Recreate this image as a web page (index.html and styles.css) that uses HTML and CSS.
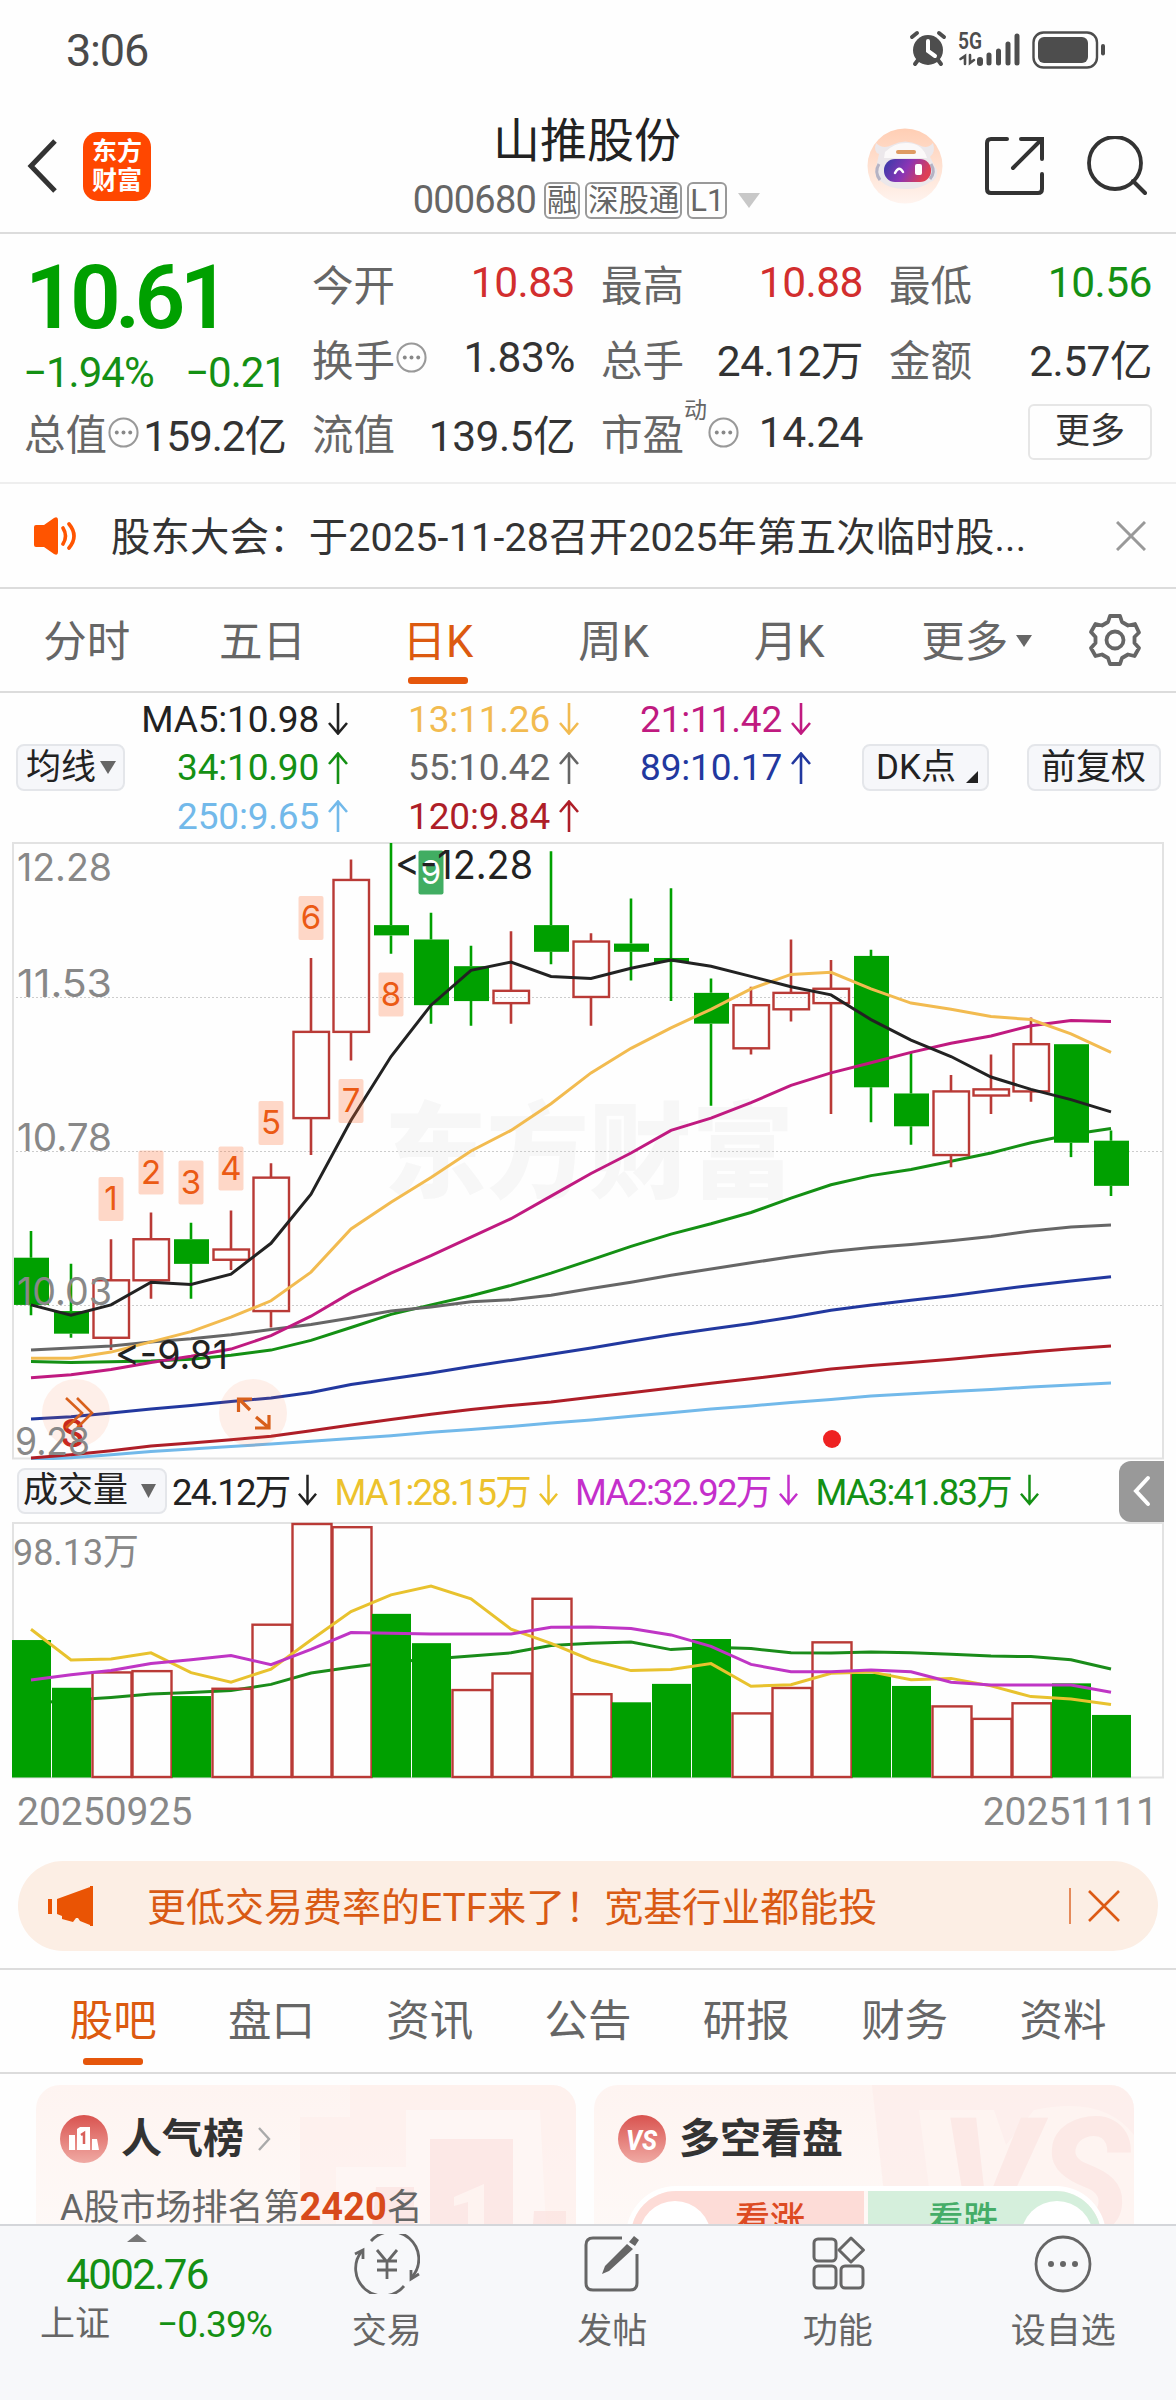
FILE: index.html
```html
<!DOCTYPE html>
<html lang="zh-CN">

<head>
  <meta charset="UTF-8">
  <meta name="viewport" content="width=device-width, initial-scale=1.0">
  <title>山推股份</title>
  <link rel="stylesheet" href="styles.css">
</head>

<body>
  <svg class="defs" width="0" height="0">
    <symbol id="down" viewBox="0 0 20 32">
      <path d="M10 0V30M1 20L10 30.5L19 20" fill="none" stroke="currentColor" stroke-width="2.6" />
    </symbol>
    <symbol id="up" viewBox="0 0 20 32">
      <path d="M10 32V2M1 12L10 1.5L19 12" fill="none" stroke="currentColor" stroke-width="2.6" />
    </symbol>
    <symbol id="info" viewBox="0 0 30 30">
      <circle cx="15" cy="15" r="13.6" fill="none" stroke="#999" stroke-width="2" />
      <circle cx="8.5" cy="15" r="1.9" fill="#888" />
      <circle cx="15" cy="15" r="1.9" fill="#888" />
      <circle cx="21.5" cy="15" r="1.9" fill="#888" />
    </symbol>
  </svg>

  <!-- 状态栏 -->
  <div class="status">
    <span class="time">3:06</span>
    <svg width="200" height="44" viewBox="0 0 200 44">
      <g stroke="#4d4d4d" stroke-linecap="round" fill="none">
        <circle cx="23" cy="23" r="15" fill="#4d4d4d" stroke="none" />
        <path d="M7 10L12 6M39 10L34 6M13 33L10 37M33 33L36 37" stroke-width="4" />
        <path d="M23 14V24L30 29" stroke="#fff" stroke-width="4" />
        <path d="M75 33V36" stroke-width="6" />
        <path d="M84 28V36M93.500 24V36M103 17V36M112 9V36" stroke-width="5" />
        <path d="M60 37V29L55.500 32M65 28V36L69 33" stroke-width="2.600" />
        <rect x="128.500" y="5.500" width="63.500" height="35" rx="10" stroke-width="2.400" />
        <rect x="133" y="10" width="50" height="26" rx="6" fill="#4d4d4d" stroke="none" />
        <path d="M198 19V26.500" stroke-width="4" />
      </g>
      <text class="net" x="53" y="22" textLength="24" lengthAdjust="spacingAndGlyphs">5G</text>
    </svg>
  </div>

  <!-- 标题 -->
  <header class="header">
    <div class="side">
      <svg width="32" height="58" viewBox="0 0 32 58">
        <path d="M28 4L4 29L28 54" fill="none" stroke="#333" stroke-width="5" />
      </svg>
      <div class="logo">东方<br>财富</div>
    </div>
    <div class="title">
      <h1>山推股份</h1>
      <div class="code">
        <span class="num">000680</span><i>融</i><i>深股通</i><i>L1</i>
        <svg width="24" height="16" viewBox="0 0 24 16"><path d="M1 1H23L12 16Z" fill="#c8c8c8" /></svg>
      </div>
    </div>
    <div class="side right">
      <svg width="76" height="76" viewBox="0 0 76 76">
        <defs>
          <linearGradient id="sky" x1="0" y1="0" x2="0" y2="1">
            <stop offset="0" stop-color="#ffceb4" />
            <stop offset="1" stop-color="#fff4ef" />
          </linearGradient>
          <linearGradient id="visor" x1="0" y1="0" x2="1" y2="0.300">
            <stop offset="0" stop-color="#343ba8" />
            <stop offset="0.550" stop-color="#8b35b5" />
            <stop offset="1" stop-color="#dd3f55" />
          </linearGradient>
        </defs>
        <circle cx="38" cy="38" r="37.500" fill="url(#sky)" />
        <path d="M12 26Q6 24 9 15Q16 22 25 17Q38 10 52 17Q60 22 66 15Q69 24 63 29Q66 35 70 42Q71 52 63 54Q52 62 38 61Q22 61 15 54Q7 50 9 40Z" fill="#ece8eb" />
        <path d="M18 24Q28 14 41 15Q56 16 60 30H17Z" fill="#fbf9f9" />
        <path d="M12 36Q7 44 13 52M64 36Q69 44 63 51" fill="none" stroke="#b5b3c4" stroke-width="3" />
        <rect x="29" y="22" width="20" height="4" rx="2" fill="#df9b63" />
        <rect x="17" y="31" width="47" height="23" rx="11" fill="url(#visor)" />
        <path d="M28 45Q32 37 36 44" fill="none" stroke="#fff" stroke-width="2.500" stroke-linecap="round" />
        <rect x="48" y="36" width="7" height="11" rx="2" fill="#fff" />
      </svg>
      <svg width="60" height="60" viewBox="0 0 60 60">
        <path d="M22 3H6Q2 3 2 7V53Q2 57 6 57H53Q57 57 57 53V38M36 3H57V23M57 3L28 32" fill="none" stroke="#333"
          stroke-width="4" stroke-linecap="round" />
      </svg>
      <svg width="60" height="60" viewBox="0 0 60 60">
        <circle cx="28" cy="27" r="26" fill="none" stroke="#333" stroke-width="3.800" />
        <path d="M46 45L58 57" stroke="#333" stroke-width="4" stroke-linecap="round" />
      </svg>
    </div>
  </header>

  <!-- 行情 -->
  <section class="quote">
    <div class="price green">
      <b>10.61</b>
      <p><span>−1.94%</span><span>−0.21</span></p>
    </div>
    <div class="cell"><label>今开</label><span class="red">10.83</span></div>
    <div class="cell"><label>最高</label><span class="red">10.88</span></div>
    <div class="cell"><label>最低</label><span class="green">10.56</span></div>
    <div class="cell"><label>换手<svg width="31" height="31"><use href="#info" /></svg></label><span>1.83%</span></div>
    <div class="cell"><label>总手</label><span>24.12万</span></div>
    <div class="cell"><label>金额</label><span>2.57亿</span></div>
    <div class="cell cap"><label>总值<svg width="31" height="31"><use href="#info" /></svg></label><span>159.2亿</span></div>
    <div class="cell"><label>流值</label><span>139.5亿</span></div>
    <div class="cell"><label>市盈<sup>动</sup><svg width="31" height="31"><use href="#info" /></svg></label><span>14.24</span></div>
    <div class="cell end"><button class="more">更多</button></div>
  </section>

  <!-- 公告 -->
  <section class="notice">
    <svg width="48" height="40" viewBox="0 0 48 40">
      <path d="M2 11Q2 9 4 9H12L22 2Q26 0 26 4V36Q26 40 22 38L12 31H4Q2 31 2 29Z" fill="#ff5400" />
      <path d="M31 12Q36 20 31 28M37 8Q47 20 37 32" fill="none" stroke="#ff5400" stroke-width="3.600"
        stroke-linecap="round" />
    </svg>
    <p>股东大会：于2025-11-28召开2025年第五次临时股...</p>
    <svg width="30" height="30" viewBox="0 0 30 30"><path d="M1 1L29 29M29 1L1 29" stroke="#999" stroke-width="3" /></svg>
  </section>

  <ul class="tabs period">
    <li>分时</li>
    <li>五日</li>
    <li class="active">日K</li>
    <li>周K</li>
    <li>月K</li>
    <li>更多<svg width="16" height="12" viewBox="0 0 16 12"><path d="M0 0H16L8 12Z" fill="#666" /></svg></li>
    <li class="gear">
      <svg width="54" height="54" viewBox="0 0 54 54" fill="none" stroke="#666" stroke-width="3.800" stroke-linejoin="round">
        <path d="M22 3H32L34 9L40 12.500L47 11L51 19.500L46.500 24V30L51 35L46.500 43L40 41.500L34 45L32 51H22L20 45L14 41.500L7.500 43L3 35L7.500 30V24L3 19L7.500 11L14 12.500L20 9Z" />
        <circle cx="27" cy="27" r="8.500" />
      </svg>
    </li>
  </ul>

  <!-- 均线 -->
  <section class="ma">
    <button class="tag">均线<svg width="16" height="13" viewBox="0 0 16 13"><path d="M0 0H16L8 13Z" fill="#666" /></svg></button>
    <div class="ma-list">
      <span class="m5">MA5:10.98<svg><use href="#down" /></svg></span>
      <span class="m13">13:11.26<svg><use href="#down" /></svg></span>
      <span class="m21">21:11.42<svg><use href="#down" /></svg></span>
      <span class="m34">34:10.90<svg><use href="#up" /></svg></span>
      <span class="m55">55:10.42<svg><use href="#up" /></svg></span>
      <span class="m89">89:10.17<svg><use href="#up" /></svg></span>
      <span class="m250">250:9.65<svg><use href="#up" /></svg></span>
      <span class="m120">120:9.84<svg><use href="#up" /></svg></span>
    </div>
    <button class="tag dk">DK点<svg width="12" height="12" viewBox="0 0 12 12"><path d="M12 0V12H0Z" fill="#222" /></svg></button>
    <button class="tag fq">前复权</button>
  </section>

  <svg id="kline" width="1176" height="618" viewBox="0 0 1176 618"></svg>

  <!-- 成交量 -->
  <section class="vol-bar">
    <button class="tag">成交量<svg width="15" height="14" viewBox="0 0 15 14"><path d="M0 0H15L7.500 14Z" fill="#666" /></svg></button>
    <span class="v0">24.12万<svg><use href="#down" /></svg></span>
    <span class="v1">MA1:28.15万<svg><use href="#down" /></svg></span>
    <span class="v2">MA2:32.92万<svg><use href="#down" /></svg></span>
    <span class="v3">MA3:41.83万<svg><use href="#down" /></svg></span>
    <div class="fold">
      <svg width="18" height="32" viewBox="0 0 18 32">
        <path d="M15 3L3 16L15 29" fill="none" stroke="#fff" stroke-width="4" stroke-linecap="round" />
      </svg>
    </div>
  </section>

  <svg id="volume" width="1176" height="257" viewBox="0 0 1176 257"></svg>

  <div class="dates"><span>20250925</span><span>20251111</span></div>

  <div class="promo">
    <svg width="48" height="42" viewBox="0 0 48 42" fill="#ea5404">
      <path d="M1 14H5V29H1ZM10 14L43 2V40L33 36L31 33H29L26 37L15 34V31L10 29ZM43 1H46V41H43Z" />
    </svg>
    <p>更低交易费率的ETF来了！宽基行业都能投</p>
    <i></i>
    <svg width="32" height="32" viewBox="0 0 32 32"><path d="M1 1L31 31M31 1L1 31" stroke="#dc5a14" stroke-width="2.600" /></svg>
  </div>

  <ul class="tabs info">
    <li class="active">股吧</li>
    <li>盘口</li>
    <li>资讯</li>
    <li>公告</li>
    <li>研报</li>
    <li>财务</li>
    <li>资料</li>
  </ul>

  <main class="cards">
    <div class="card">
      <svg class="deco" width="540" height="180" viewBox="0 0 540 180">
        <path d="M314 0H540V180H264V32H314Z" fill="#fdeeeb" opacity=".6" />
        <path d="M370 25H504L512 180H300V82H370Z" fill="#fef6f4" />
        <path d="M394 54H477V180H394ZM340 102H378V180H332ZM498 126H530V180H494Z" fill="#fbe3df" opacity=".7" />
        <path d="M418 112L448 99V180H432V117L418 121Z" fill="#fef3f0" />
      </svg>
      <h2>
        <svg width="48" height="48" viewBox="0 0 48 48">
          <defs>
            <linearGradient id="ball" x1="0" y1="0" x2="0" y2="1">
              <stop offset="0" stop-color="#d9534f" />
              <stop offset="1" stop-color="#f0aaa4" />
            </linearGradient>
          </defs>
          <circle cx="24" cy="24" r="24" fill="url(#ball)" />
          <path d="M9 20H15V35H9ZM17 14L20 12H30V35H17ZM32 24H37L39 35H32Z" fill="#fff" />
          <path d="M21 20L24 18V29" fill="none" stroke="#d9605b" stroke-width="2.500" />
        </svg>
        人气榜
        <svg width="14" height="24" viewBox="0 0 14 24"><path d="M2 1L12 12L2 23" fill="none" stroke="#aaa" stroke-width="2.400" /></svg>
      </h2>
      <p>A股市场排名第<b>2420</b>名</p>
    </div>
    <div class="card">
      <svg class="deco" width="540" height="180" viewBox="0 0 540 180">
        <path d="M278 0H540V180H298Z" fill="#fdeeeb" opacity=".8" />
        <path d="M325 25H400L412 60L440 25Q510 10 540 50V180H345Z" fill="#fef4f1" />
        <text class="ghost" x="346" y="150" textLength="190" lengthAdjust="spacingAndGlyphs">VS</text>
      </svg>
      <h2>
        <svg width="48" height="48" viewBox="0 0 48 48">
          <circle cx="24" cy="24" r="24" fill="url(#ball)" />
          <text class="vs" x="8" y="35" textLength="31" lengthAdjust="spacingAndGlyphs">VS</text>
        </svg>
        多空看盘
      </h2>
      <div class="vote"><span class="rise">看涨</span><span class="fall">看跌</span></div>
    </div>
  </main>

  <!-- 底部 -->
  <footer class="footer">
    <div class="index">
      <svg width="20" height="8" viewBox="0 0 20 8"><path d="M10 0L20 8H0Z" fill="#777" /></svg>
      <b class="green">4002.76</b>
      <p>上证<span class="green">−0.39%</span></p>
    </div>
    <div class="item">
      <svg width="66" height="60" viewBox="0 0 66 60" fill="none" stroke="#666" stroke-width="2.800">
        <path d="M17 7A27 27 0 0 1 58 43M50 52A27 27 0 0 1 8 17" />
        <path d="M1 20L9 16V25M65 40L57 45V36" />
        <path d="M23 16L33 28L43 16M23 27H43M23 36H43M33 28V45" />
      </svg>
      交易
    </div>
    <div class="item">
      <svg width="60" height="60" viewBox="0 0 60 60" fill="none" stroke="#666" stroke-width="3">
        <path d="M40 4H11Q4 4 4 11V49Q4 56 11 56H48Q55 56 55 49V20" />
        <path d="M47 8L52 2L57 6L53 12ZM45 10L51 15L27 37L20 40L23 32Z" fill="#666" stroke="none" />
      </svg>
      发帖
    </div>
    <div class="item">
      <svg width="60" height="60" viewBox="0 0 60 60" fill="none" stroke="#666" stroke-width="3">
        <rect x="6" y="5" width="22" height="22" rx="4" />
        <path d="M43 4L55.500 16L43 28L31 16Z" stroke-linejoin="round" />
        <rect x="6" y="32" width="22" height="22" rx="4" />
        <rect x="33" y="32" width="22" height="22" rx="4" />
      </svg>
      功能
    </div>
    <div class="item">
      <svg width="60" height="60" viewBox="0 0 60 60">
        <circle cx="30" cy="30" r="27" fill="none" stroke="#666" stroke-width="2.800" />
        <circle cx="18" cy="30" r="3" fill="#666" />
        <circle cx="30" cy="30" r="3" fill="#666" />
        <circle cx="42" cy="30" r="3" fill="#666" />
      </svg>
      设自选
    </div>
  </footer>

  <script src="chart.js"></script>
</body>

</html>
```
FILE: styles.css
```css
* {
  margin: 0;
  padding: 0;
  box-sizing: border-box;
}

body {
  width: 1176px;
  height: 2400px;
  overflow: hidden;
  display: flex;
  flex-direction: column;
  background: #fefefe;
  color: #333;
  font-family: Roboto, "Noto Sans CJK SC", sans-serif;
}

body>* {
  flex-shrink: 0;
}

li {
  list-style: none;
}

svg {
  display: block;
  flex-shrink: 0;
}

.defs {
  position: absolute;
}

i {
  font-style: normal;
}

button {
  font-family: inherit;
  border: none;
  background: none;
}

.green {
  color: #149014;
}

.red {
  color: #d22e2e;
}

/* 状态栏 */
.status {
  height: 100px;
  padding: 0 71px 0 66px;
  display: flex;
  align-items: center;
  justify-content: space-between;
}

.status .time {
  font-size: 45px;
  letter-spacing: -1.2px;
  color: #4a4a4a;
}

.status svg {
  margin-bottom: 2px;
}

.net {
  font-size: 23px;
  font-weight: 600;
  fill: #4d4d4d;
}

/* 标题 */
.header {
  height: 134px;
  padding: 0 27px;
  border-bottom: 2px solid #dcdcdc;
  display: flex;
  justify-content: space-between;
}

.side {
  width: 300px;
  height: 132px;
  display: flex;
  align-items: center;
}

.side.right {
  justify-content: flex-end;
  gap: 42px;
  padding-right: 2px;
}

.logo {
  width: 68px;
  height: 69px;
  margin-left: 24px;
  border-radius: 15px;
  background: #ff4700;
  color: #fff;
  font-size: 25px;
  font-weight: 700;
  line-height: 29px;
  text-align: center;
  padding-top: 5px;
}

.title {
  padding-top: 13px;
  text-align: center;
}

.title h1 {
  font-size: 47px;
  font-weight: 400;
  line-height: 56px;
  color: #222;
  margin-left: -2px;
}

.code {
  display: flex;
  align-items: center;
  justify-content: center;
  height: 40px;
  margin-top: 11px;
  margin-left: -2px;
  color: #666;
}

.code .num {
  font-size: 38px;
  letter-spacing: -0.8px;
  margin-right: 3px;
}

.code i {
  height: 37px;
  margin-left: 5px;
  padding: 0 1px;
  border: 2px solid #999;
  border-radius: 6px;
  font-size: 30.3px;
  line-height: 33px;
}

.code i:nth-of-type(3) {
  font-size: 31px;
}

.code svg {
  margin-left: 10px;
}

/* 行情 */
.quote {
  height: 250px;
  padding: 11px 24px 0 26px;
  border-bottom: 2px solid #eee;
  display: grid;
  grid-template-columns: 260px 263px 262px 263px;
  grid-template-rows: 75px 75px 74px;
  column-gap: 26px;
}

.price {
  grid-row: span 2;
}

.price b {
  display: block;
  margin: 4px 0 0 -1px;
  font-size: 89px;
  font-weight: 600;
  line-height: 98px;
  letter-spacing: -5.8px;
  color: #00a000;
}

.price p {
  display: flex;
  justify-content: space-between;
  margin-left: -3px;
  padding-top: 1px;
  font-size: 42px;
  line-height: 50px;
  letter-spacing: -1px;
}

.cell {
  display: flex;
  align-items: center;
  justify-content: space-between;
  font-size: 42.5px;
  letter-spacing: -0.5px;
}

.cell.cap {
  margin-left: -2px;
  letter-spacing: -1.1px;
}

.cell.end {
  justify-content: flex-end;
}

.cell label {
  display: flex;
  align-items: center;
  font-size: 41.5px;
  letter-spacing: 0;
  color: #666;
}

.cell label svg {
  margin-left: 1px;
}

.cell sup {
  align-self: flex-start;
  font-size: 23px;
  line-height: 18px;
}

.more {
  width: 124px;
  height: 56px;
  border: 2px solid #e6e6e6;
  border-radius: 6px;
  font-size: 35px;
  line-height: 48px;
  color: #333;
}

/* 公告 */
.notice {
  height: 105px;
  padding: 0 30px 0 32px;
  border-bottom: 2px solid #dcdcdc;
  display: flex;
  align-items: center;
}

.notice p {
  flex: 1;
  margin: 0 0 5px 31px;
  font-size: 39.3px;
  letter-spacing: 0.25px;
  white-space: nowrap;
}

/* 选项卡 */
.tabs {
  height: 104px;
  border-bottom: 2px solid #dcdcdc;
  display: flex;
  align-items: center;
  color: #666;
}

.tabs li {
  position: relative;
  height: 102px;
  font-size: 43.5px;
  line-height: 108px;
  text-align: center;
}

.tabs .active {
  color: #dc5a10;
}

.tabs .active::after {
  content: "";
  position: absolute;
  left: 50%;
  bottom: 7px;
  width: 60px;
  height: 7px;
  margin-left: -30px;
  border-radius: 3px;
  background: #e5560b;
}

.period {
  margin-left: -1px;
}

.period li {
  width: 175.6px;
}

.period li>svg {
  position: absolute;
  top: 46px;
  right: 21px;
}

.period .gear {
  width: 122px;
}

.period .gear svg {
  top: 24px;
  right: 33px;
}

.info li {
  width: 158.3px;
  height: 102px;
  line-height: 104px;
}

/* 均线 */
.tag {
  display: flex;
  align-items: center;
  height: 47px;
  border: 2px solid #e4e6ea;
  border-radius: 8px;
  background: #f6f7fa;
  color: #222;
  font-size: 35px;
  line-height: 40px;
  white-space: nowrap;
}

.ma {
  height: 149px;
  padding: 0 15px 0 16px;
  display: flex;
  align-items: center;
}

.ma .tag {
  width: 109px;
  padding-left: 8px;
}

.ma .tag svg {
  margin-left: 4px;
}

.ma .dk {
  width: 127px;
  padding-left: 12px;
  margin-left: auto;
}

.ma .dk svg {
  margin: 19px 0 0 10px;
}

.ma .fq {
  width: 134px;
  padding-left: 12px;
  margin-left: 38px;
}

.ma-list {
  display: grid;
  grid-template-columns: 223px 231px 232px;
  grid-auto-rows: 48.5px;
}

.ma-list span {
  display: flex;
  align-items: center;
  justify-content: flex-end;
  font-size: 37px;
  letter-spacing: -0.2px;
}

.ma-list svg {
  width: 20px;
  height: 32px;
  margin-left: 9px;
}

.m5 {
  color: #222;
}

.m13 {
  color: #f2bb50;
}

.m21 {
  color: #c01a80;
}

.m34 {
  color: #149014;
}

.m55 {
  color: #666;
}

.m89 {
  color: #22389f;
}

.m120 {
  color: #ae1e28;
}

.m250 {
  color: #72b9ea;
}

/* 图表 */
.axis {
  font-family: Inter, sans-serif;
  font-size: 38px;
  fill: #888;
}

.mark {
  font-family: Inter, sans-serif;
  font-size: 39px;
  fill: #222;
}

.step {
  font-family: Inter, sans-serif;
  font-size: 33px;
  text-anchor: middle;
  fill: #eb5a14;
}

.step.top {
  fill: #fff;
}

.water {
  font-family: "Noto Sans CJK SC", sans-serif;
  font-weight: 900;
  font-size: 104px;
  fill: #f7f7f7;
}

.sell {
  font-size: 38px;
  font-weight: 500;
  fill: #c8281e;
}

.amount {
  font-size: 37px;
  fill: #888;
}

.vol-bar {
  height: 62px;
  padding: 0 12px 0 17px;
  display: flex;
  align-items: center;
}

.vol-bar .tag {
  width: 150px;
  height: 46px;
  padding-left: 4px;
}

.vol-bar .tag svg {
  margin-left: 13px;
}

.vol-bar span {
  display: flex;
  align-items: center;
  margin: 0 0 3px 17px;
  font-size: 36.5px;
  letter-spacing: -1.8px;
  white-space: nowrap;
}

.vol-bar span svg {
  width: 19px;
  height: 32px;
  margin-left: 9px;
}

.vol-bar .v0 {
  margin-left: 5px;
  color: #222;
}

.v1 {
  color: #ecc22c;
}

.v2 {
  color: #c42fcb;
}

.v3 {
  color: #149014;
}

.fold {
  width: 45px;
  height: 61px;
  margin-left: auto;
  border-radius: 12px 0 0 12px;
  background: #999;
  display: flex;
  align-items: center;
  justify-content: center;
}

.dates {
  height: 82px;
  padding: 9px 18px 0 17px;
  display: flex;
  justify-content: space-between;
  font-size: 39px;
  line-height: 48px;
  letter-spacing: 0;
  color: #888;
}

/* 推广 */
.promo {
  height: 90px;
  margin: 0 18px 17px;
  padding: 0 38px 0 29px;
  border-radius: 45px;
  background: #fceee4;
  display: flex;
  align-items: center;
  color: #d95a14;
}

.promo p {
  flex: 1;
  margin: 0 0 5px 52px;
  font-size: 39px;
}

.promo i {
  width: 2px;
  height: 36px;
  margin-right: 17px;
  background: #e58a5a;
}

.info {
  height: 106px;
  padding-left: 34px;
  border-top: 2px solid #dcdcdc;
}

/* 卡片 */
.cards {
  flex: 1 1 0;
  min-height: 0;
  overflow: hidden;
  padding: 11px 42px 0 36px;
  display: flex;
  gap: 18px;
}

.card {
  position: relative;
  width: 540px;
  height: 180px;
  padding: 24px;
  border-radius: 24px 24px 0 0;
  background: linear-gradient(#fef4f1, #fefaf8);
  overflow: hidden;
}

.deco {
  position: absolute;
  left: 0;
  top: 0;
}

.ghost {
  font-size: 165px;
  font-weight: 800;
  font-style: italic;
  fill: #fce9e6;
}

.vs {
  font-size: 28px;
  font-weight: 800;
  font-style: italic;
  fill: #fff;
}

.card h2 {
  position: relative;
  height: 60px;
  display: flex;
  align-items: center;
  gap: 13px;
  font-size: 41px;
  line-height: 60px;
  color: #333;
}

.card p {
  position: relative;
  margin-top: 17px;
  font-size: 36px;
  line-height: 42px;
  color: #666;
}

.card b {
  font-size: 38px;
  color: #d84a1b;
}

.vote {
  position: relative;
  width: 480px;
  height: 100px;
  margin: 17px 0 0 8px;
  border: 5px solid #fff;
  border-bottom: 0;
  border-radius: 50px 50px 0 0;
  display: flex;
  gap: 4px;
  overflow: hidden;
  font-size: 35px;
  font-weight: 500;
  line-height: 60px;
}

.vote span {
  position: relative;
  width: 50%;
}

.vote span::before {
  content: "";
  position: absolute;
  top: 10px;
  width: 72px;
  height: 72px;
  border-radius: 50%;
  background: #fff;
}

.rise {
  padding-left: 104px;
  background: #fddcd7;
  color: #dd4a22;
}

.rise::before {
  left: 8px;
}

.fall {
  padding-left: 60px;
  background: #d5efdc;
  color: #45ad68;
}

.fall::before {
  right: 8px;
}

/* 底部 */
.footer {
  height: 176px;
  border-top: 2px solid #d4d6da;
  background: #f7f8fa;
  display: flex;
  color: #666;
}

.index {
  width: 274px;
  padding-top: 8px;
  display: flex;
  flex-direction: column;
  align-items: center;
}

.index b {
  margin-top: 1px;
  font-size: 42px;
  font-weight: 400;
  line-height: 64px;
  letter-spacing: -1.6px;
}

.index p {
  width: 232px;
  display: flex;
  justify-content: space-between;
  font-size: 35px;
  line-height: 36px;
  margin-left: 38px;
}

.index p span {
  font-size: 37px;
  letter-spacing: -0.9px;
}

.item {
  width: 225.5px;
  padding-top: 8px;
  display: flex;
  flex-direction: column;
  align-items: center;
  font-size: 35px;
  line-height: 76px;
}
```
FILE: chart.js
```javascript
var oKline = document.getElementById('kline');
var oVolume = document.getElementById('volume');

var RED = '#b93a36';
var GREEN = '#00a000';
var STEP = 40;
var FIRST = 31;

// 开、收、高、低
var candles = [
  [10.26, 10.03, 10.39, 9.98], [10.00, 9.89, 10.23, 9.87], [9.87, 10.15, 10.35, 9.81], [10.15, 10.35, 10.48, 10.06],
  [10.35, 10.23, 10.43, 10.06], [10.25, 10.30, 10.49, 10.20], [10.00, 10.65, 10.72, 9.92], [10.94, 11.36, 11.72, 10.76],
  [11.36, 12.10, 12.20, 11.22], [11.88, 11.83, 12.28, 11.74], [11.81, 11.49, 11.94, 11.40], [11.68, 11.51, 11.78, 11.39],
  [11.50, 11.56, 11.85, 11.40], [11.88, 11.75, 12.24, 11.69], [11.53, 11.80, 11.84, 11.39], [11.79, 11.75, 12.01, 11.61],
  [11.72, 11.70, 12.06, 11.51], [11.55, 11.40, 11.62, 11.00], [11.28, 11.49, 11.58, 11.25], [11.47, 11.55, 11.81, 11.41],
  [11.50, 11.57, 11.71, 10.96], [11.73, 11.09, 11.76, 10.92], [11.06, 10.90, 11.26, 10.81], [10.76, 11.07, 11.15, 10.70],
  [11.05, 11.08, 11.25, 10.96], [11.07, 11.30, 11.43, 11.02], [11.30, 10.82, 11.30, 10.75], [10.83, 10.61, 10.88, 10.56]
];

var maLines = [
  { color: '#72b9ea', data: [9.277, 9.286, 9.30, 9.316, 9.328, 9.34, 9.353, 9.366, 9.38, 9.393, 9.41, 9.423, 9.438, 9.455, 9.47, 9.488, 9.505, 9.523, 9.538, 9.555, 9.57, 9.587, 9.597, 9.608, 9.618, 9.63, 9.64, 9.65] },
  { color: '#ae1e28', data: [9.284, 9.30, 9.32, 9.343, 9.357, 9.373, 9.39, 9.417, 9.445, 9.472, 9.497, 9.52, 9.54, 9.557, 9.58, 9.602, 9.626, 9.648, 9.67, 9.694, 9.718, 9.735, 9.75, 9.765, 9.783, 9.80, 9.817, 9.83] },
  { color: '#22389f', data: [9.475, 9.485, 9.503, 9.523, 9.54, 9.56, 9.576, 9.604, 9.642, 9.67, 9.698, 9.73, 9.76, 9.79, 9.82, 9.853, 9.885, 9.913, 9.94, 9.97, 10.004, 10.03, 10.053, 10.075, 10.10, 10.125, 10.147, 10.167] },
  { color: '#666', data: [9.81, 9.82, 9.83, 9.85, 9.865, 9.885, 9.91, 9.935, 9.967, 10.0, 10.02, 10.045, 10.055, 10.077, 10.11, 10.14, 10.175, 10.205, 10.235, 10.265, 10.29, 10.31, 10.325, 10.343, 10.363, 10.39, 10.41, 10.42] },
  { color: '#c01a80', data: [9.675, 9.69, 9.715, 9.75, 9.78, 9.815, 9.88, 9.975, 10.09, 10.185, 10.27, 10.36, 10.45, 10.56, 10.67, 10.77, 10.88, 10.94, 11.015, 11.10, 11.16, 11.21, 11.26, 11.305, 11.34, 11.39, 11.415, 11.41] },
  { color: '#f2bb50', data: [9.77, 9.77, 9.80, 9.85, 9.90, 9.97, 10.05, 10.19, 10.40, 10.53, 10.65, 10.78, 10.88, 11.01, 11.16, 11.28, 11.38, 11.47, 11.57, 11.64, 11.65, 11.57, 11.50, 11.47, 11.435, 11.42, 11.35, 11.26] },
  { color: '#222', data: [10.03, 9.98, 10.03, 10.14, 10.13, 10.18, 10.33, 10.57, 10.93, 11.24, 11.49, 11.66, 11.70, 11.63, 11.62, 11.67, 11.71, 11.68, 11.63, 11.58, 11.54, 11.42, 11.32, 11.24, 11.14, 11.08, 11.03, 10.97] }
];
var ma34 = [9.755, 9.75, 9.753, 9.757, 9.765, 9.785, 9.81, 9.857, 9.92, 9.984, 10.03, 10.075, 10.125, 10.185, 10.25, 10.315, 10.375, 10.425, 10.48, 10.55, 10.615, 10.66, 10.69, 10.73, 10.77, 10.82, 10.86, 10.89];

// 九转序列：序号、第几根、纵坐标
var steps = [
  [1, 2, 357], [2, 3, 330.5], [3, 4, 340.5], [4, 5, 326.5], [5, 6, 281],
  [6, 7, 76], [7, 8, 259], [8, 9, 152.5], [9, 10, 30.5]
];

var volumes = [53.0, 34.6, 40.9, 41.4, 31.4, 34.6, 59.3, 98.13, 96.9, 63.1, 51.8, 34.1, 40.5, 69.3, 32.5, 29.0, 36.1, 53.4, 25.1, 34.9, 52.5, 40.0, 35.3, 27.8, 23.0, 29.0, 36.3, 24.12];
var volColors = 'ggrrgrrrrggrrrrgggrrrggrrrgg';
var vma1 = [57.2, 45.3, 45.7, 48.1, 40.4, 36.8, 41.8, 53.0, 64.0, 70.4, 73.8, 68.9, 57.2, 51.7, 45.3, 41.2, 41.6, 43.9, 35.2, 35.8, 40.2, 40.7, 37.7, 38.2, 35.3, 31.2, 30.3, 28.15];
var vma2 = [37.6, 39.6, 41.3, 44.0, 45.4, 47.0, 43.5, 49.4, 55.9, 55.6, 55.3, 55.3, 55.3, 57.9, 58.0, 57.4, 55.0, 50.6, 43.6, 40.8, 40.8, 41.4, 40.8, 36.7, 35.7, 35.7, 35.7, 32.9];
var vma3 = [28.4, 29.9, 30.9, 32.2, 32.8, 33.6, 35.9, 40.3, 42.5, 44.4, 45.7, 46.8, 48.1, 50.9, 51.8, 52.2, 49.3, 50.2, 49.7, 48.1, 48.0, 48.4, 48.1, 47.5, 46.8, 46.6, 45.4, 41.83];

function priceY(p) {
  return 1 + (12.28 - p) * 205.3;
}

function volY(v) {
  return 255.5 - v / 98.13 * 254.5;
}

function rect(x, y, w, h, attr) {
  return '<rect x="' + x + '" y="' + y + '" width="' + w + '" height="' + h + '" ' + attr + '/>';
}

function line(data, fn, color) {
  var pts = [];
  for (var i = 0; i < data.length; i++) {
    pts.push((FIRST + i * STEP) + ',' + fn(data[i]).toFixed(1));
  }
  return '<polyline points="' + pts.join(' ') + '" fill="none" stroke="' + color + '" stroke-width="3"/>';
}

function text(cls, x, y, str, w) {
  var len = w ? ' textLength="' + w + '" lengthAdjust="spacingAndGlyphs"' : '';
  return '<text class="' + cls + '" x="' + x + '" y="' + y + '"' + len + '>' + str.replace('<', '&lt;') + '</text>';
}

function drawKline() {
  var html = text('water', 384, 348, '东方财富', 410);
  // 网格
  for (var g = 1; g < 4; g++) {
    var gy = 1.5 + g * 154;
    html += '<path d="M12 ' + gy + 'H1163" stroke="#ccc" stroke-width="1" stroke-dasharray="2 2"/>';
  }
  html += rect(13, 1, 1150, 615.5, 'fill="none" stroke="#e2e2e2" stroke-width="2"');
  html += line(ma34, priceY, '#149014');
  for (var i = 0; i < candles.length; i++) {
    var c = candles[i];
    var x = FIRST + i * STEP;
    var up = c[1] > c[0];
    var top = priceY(Math.max(c[0], c[1]));
    var bottom = priceY(Math.min(c[0], c[1]));
    var color = up ? RED : GREEN;
    html += '<path d="M' + x + ' ' + priceY(c[2]) + 'V' + top + 'M' + x + ' ' + bottom + 'V' + priceY(c[3]) + '" stroke="' + color + '" stroke-width="2.6"/>';
    if (up) {
      html += rect(x - 17.5, top, 35.5, bottom - top, 'fill="none" stroke="' + RED + '" stroke-width="2.4"');
    } else {
      html += rect(x - 17, top, 35, Math.max(bottom - top, 3), 'fill="' + GREEN + '"');
    }
  }
  for (var m = 0; m < maLines.length; m++) {
    html += line(maLines[m].data, priceY, maLines[m].color);
  }
  for (var s = 0; s < steps.length; s++) {
    var n = steps[s][0];
    var sx = FIRST + steps[s][1] * STEP;
    var sy = steps[s][2];
    html += rect(sx - 12.5, sy - 22, 25, 44, 'rx="2" fill="' + (n === 9 ? '#41ad62' : '#ff6e32') + '"' + (n === 9 ? '' : ' fill-opacity="0.27"'));
    html += text(n === 9 ? 'step top' : 'step', sx, sy + 11, String(n));
  }
  // 悬浮按钮
  html += '<circle cx="76" cy="571" r="34" fill="#ff6e32" fill-opacity="0.1"/>';
  html += '<circle cx="253" cy="571" r="34" fill="#ff6e32" fill-opacity="0.1"/>';
  html += text('sell', 61, 605, 'S');
  html += '<path d="M66 556L82 571L66 586M77 556L92 571L77 586" fill="none" stroke="#d8601c" stroke-width="2.6"/>';
  html += '<path d="M238.5 570V557H252M240 558L250 568M269 573V586H255M268 585L256 575" fill="none" stroke="#d8601c" stroke-width="3.2"/>';
  html += '<circle cx="832" cy="597" r="9" fill="#ee2222"/>';
  html += text('axis', 17, 39, '12.28', 95);
  html += text('axis', 17, 155, '11.53', 95);
  html += text('axis', 17, 309, '10.78', 95);
  html += text('axis', 17, 463, '10.03', 95);
  html += text('axis', 15, 613, '9.28', 75);
  html += text('mark', 115, 527, '<-9.81', 113);
  html += text('mark', 395, 37, '<-12.28', 138);
  oKline.innerHTML = html;
}

function drawVolume() {
  var html = rect(13, 1, 1150, 254.5, 'fill="none" stroke="#e2e2e2" stroke-width="2"');
  html += line(vma3, volY, '#1a8c1a');
  for (var i = 0; i < volumes.length; i++) {
    var x = 12 + i * STEP;
    var y = volY(volumes[i]);
    if (volColors[i] === 'r') {
      html += rect(x + 0.5, y + 1, 39, 254 - y, 'fill="none" stroke="' + RED + '" stroke-width="2.4"');
    } else {
      html += rect(x, y, 39, 255.5 - y, 'fill="' + GREEN + '"');
    }
  }
  html += line(vma1, volY, '#e8c22e');
  html += line(vma2, volY, '#bf35c5');
  html += text('amount', 13, 43, '98.13万', 126);
  oVolume.innerHTML = html;
}

drawKline();
drawVolume();
```
